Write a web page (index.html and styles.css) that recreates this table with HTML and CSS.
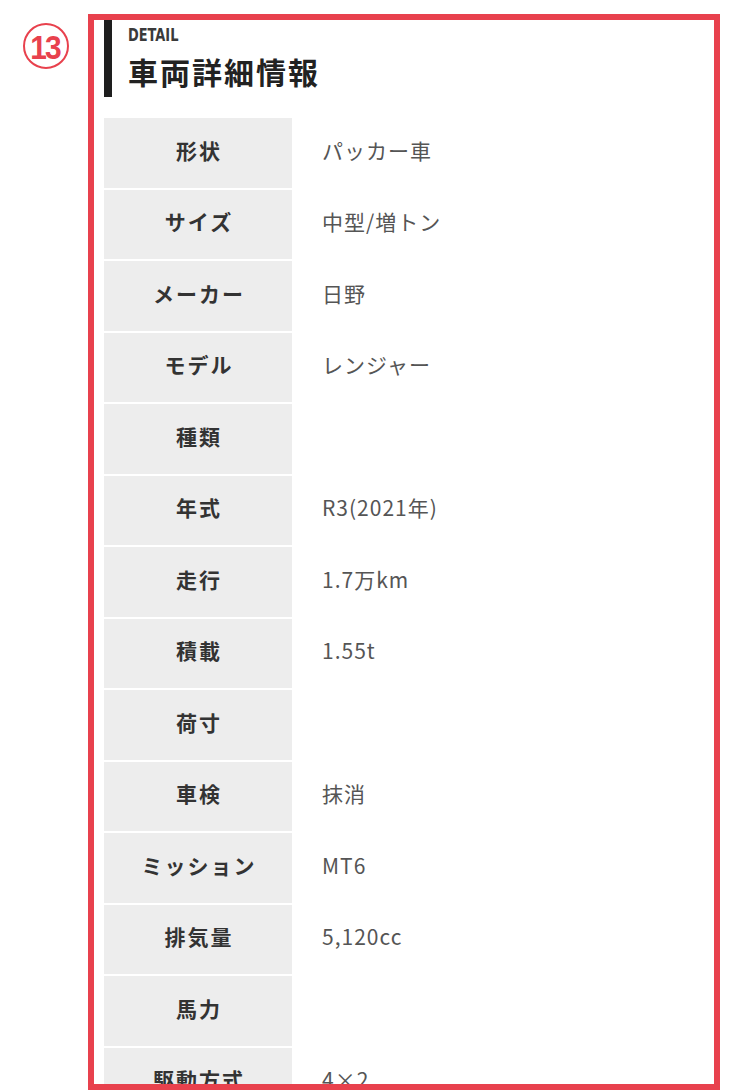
FILE: index.html
```html
<!DOCTYPE html>
<html lang="ja">
<head>
<meta charset="utf-8">
<title>車両詳細情報</title>
<link rel="stylesheet" href="styles.css">
</head>
<body>
<div class="page">
  <div class="num-badge"><span class="num-text">13</span></div>
  <section class="frame">
    <header class="heading">
      <div class="heading-en">DETAIL</div>
      <h2 class="heading-ja">車両詳細情報</h2>
    </header>
    <div class="spec">
      <div class="spec-row"><div class="spec-label">形状</div><div class="spec-value">パッカー車</div></div>
      <div class="spec-row"><div class="spec-label">サイズ</div><div class="spec-value">中型/増トン</div></div>
      <div class="spec-row"><div class="spec-label">メーカー</div><div class="spec-value">日野</div></div>
      <div class="spec-row"><div class="spec-label">モデル</div><div class="spec-value">レンジャー</div></div>
      <div class="spec-row"><div class="spec-label">種類</div><div class="spec-value"></div></div>
      <div class="spec-row"><div class="spec-label">年式</div><div class="spec-value">R3(2021年)</div></div>
      <div class="spec-row"><div class="spec-label">走行</div><div class="spec-value">1.7万km</div></div>
      <div class="spec-row"><div class="spec-label">積載</div><div class="spec-value">1.55t</div></div>
      <div class="spec-row"><div class="spec-label">荷寸</div><div class="spec-value"></div></div>
      <div class="spec-row"><div class="spec-label">車検</div><div class="spec-value">抹消</div></div>
      <div class="spec-row"><div class="spec-label">ミッション</div><div class="spec-value">MT6</div></div>
      <div class="spec-row"><div class="spec-label">排気量</div><div class="spec-value">5,120cc</div></div>
      <div class="spec-row"><div class="spec-label">馬力</div><div class="spec-value"></div></div>
      <div class="spec-row"><div class="spec-label">駆動方式</div><div class="spec-value">4×2</div></div>
    </div>
  </section>
</div>
</body>
</html>
```

FILE: styles.css
```css
html, body {
  margin: 0;
  padding: 0;
  background: #ffffff;
  overflow: hidden;
}

body {
  font-family: "Noto Sans CJK JP", "Noto Sans", sans-serif;
}

.page {
  display: flex;
  align-items: flex-start;
  padding-top: 14px;
  height: 1076px;
}

.num-badge {
  box-sizing: border-box;
  width: 46px;
  height: 46px;
  margin: 9px 19px 0 23px;
  border: 2px solid #e8414d;
  border-radius: 50%;
  display: flex;
  align-items: center;
  justify-content: center;
  flex-shrink: 0;
}

.num-text {
  font-family: "Liberation Sans", Arial, sans-serif;
  font-weight: 700;
  font-size: 34px;
  line-height: 1;
  letter-spacing: -2px;
  color: #e8414d;
  padding-right: 2px;
  padding-top: 1px;
  transform: scaleX(0.88);
}

.frame {
  box-sizing: border-box;
  width: 632px;
  height: 1076px;
  border: 6px solid #e8414d;
  padding-left: 10px;
  overflow: hidden;
  flex-shrink: 0;
}

.heading {
  border-left: 8px solid #1e1e1e;
  padding: 5px 0 8px 16px;
}

.heading-en {
  font-family: "DejaVu Sans Condensed", "DejaVu Sans", sans-serif;
  font-weight: 700;
  font-size: 18px;
  line-height: 20px;
  color: #3a3a3a;
  transform: scaleX(0.8);
  transform-origin: left center;
}

.heading-ja {
  margin: 8px 0 0;
  font-size: 30px;
  line-height: 36px;
  font-weight: 700;
  letter-spacing: 2px;
  color: #222222;
}

.spec {
  margin-top: 21px;
  display: flex;
  flex-direction: column;
  gap: 2px;
}

.spec-row {
  display: flex;
  height: 69.5px;
}

.spec-label {
  width: 188px;
  flex-shrink: 0;
  background: #ededed;
  display: flex;
  align-items: center;
  justify-content: center;
  font-size: 21px;
  font-weight: 700;
  letter-spacing: 2px;
  padding: 0 0 6px 2px;
  box-sizing: border-box;
  color: #333333;
}

.spec-value {
  flex: 1;
  display: flex;
  align-items: center;
  padding: 0 0 6px 30px;
  font-size: 21px;
  letter-spacing: 1px;
  color: #555555;
}
```
